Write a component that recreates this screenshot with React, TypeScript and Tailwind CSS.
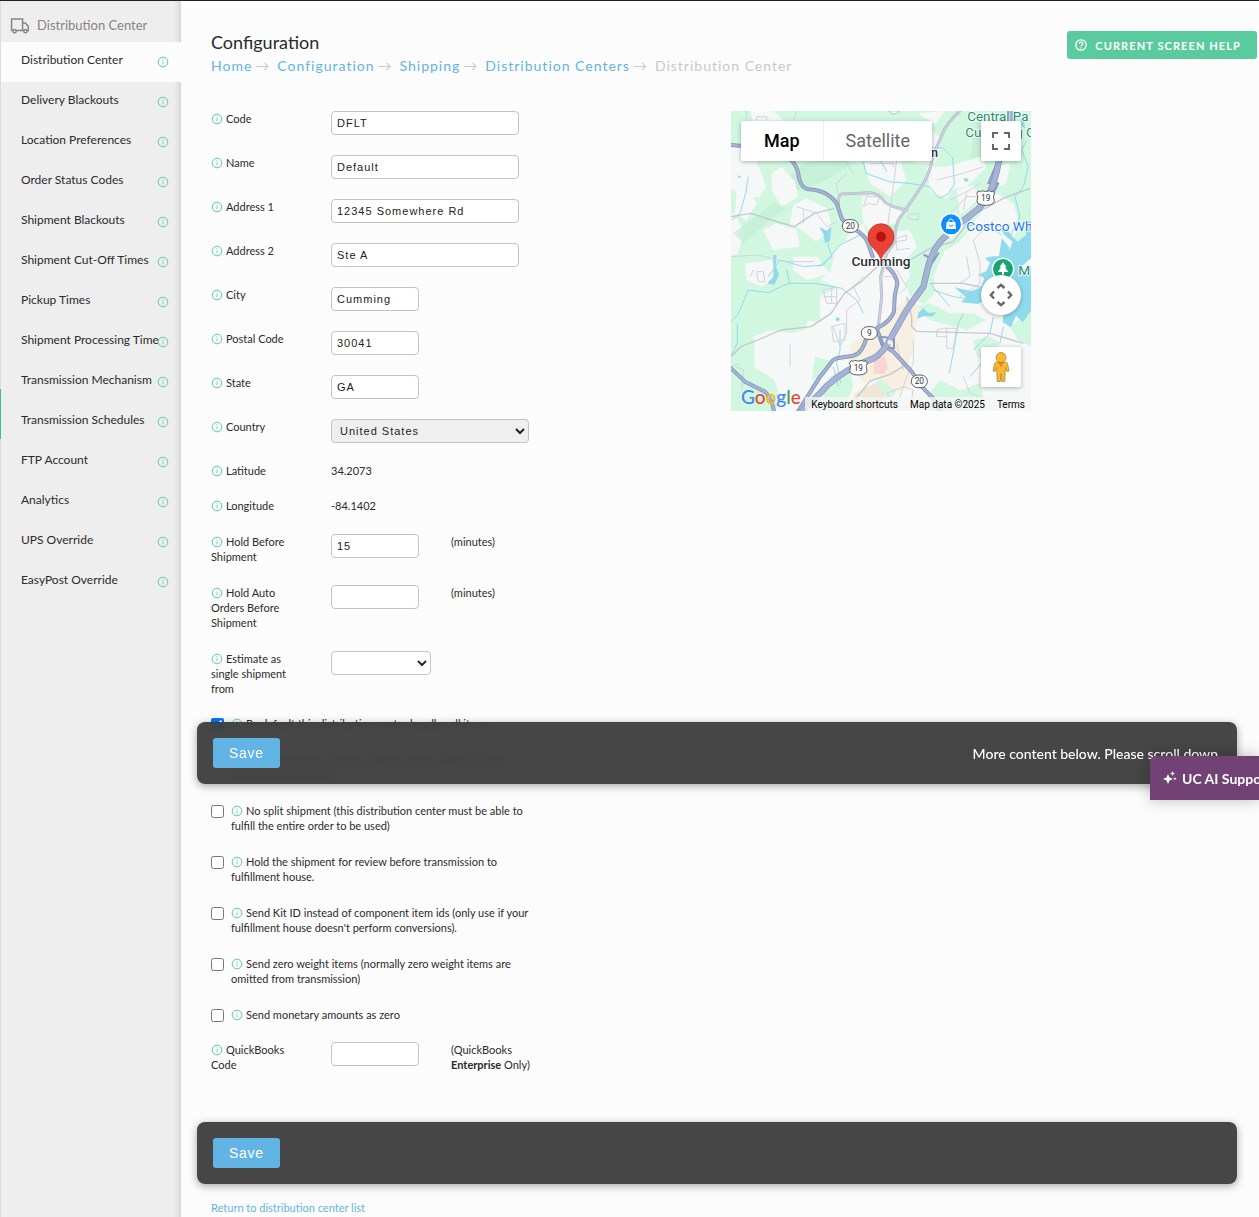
import type { ReactNode } from 'react'

const sidebarItems = [
  'Distribution Center',
  'Delivery Blackouts',
  'Location Preferences',
  'Order Status Codes',
  'Shipment Blackouts',
  'Shipment Cut-Off Times',
  'Pickup Times',
  'Shipment Processing Time',
  'Transmission Mechanism',
  'Transmission Schedules',
  'FTP Account',
  'Analytics',
  'UPS Override',
  'EasyPost Override',
]

const breadcrumbs = ['Home', 'Configuration', 'Shipping', 'Distribution Centers']

const addressFields = [
  { id: 'code', label: 'Code', value: 'DFLT', wide: true },
  { id: 'name', label: 'Name', value: 'Default', wide: true },
  { id: 'address1', label: 'Address 1', value: '12345 Somewhere Rd', wide: true },
  { id: 'address2', label: 'Address 2', value: 'Ste A', wide: true },
  { id: 'city', label: 'City', value: 'Cumming', wide: false },
  { id: 'postalCode', label: 'Postal Code', value: '30041', wide: false },
  { id: 'state', label: 'State', value: 'GA', wide: false },
]

const options = [
  { id: 'handlesAll', label: 'By default this distribution center handles all items', checked: true },
  { id: 'pickup', label: 'Allow customers to pick up their orders at this location during business hours', checked: false },
  { id: 'noSplit', label: 'No split shipment (this distribution center must be able to fulfill the entire order to be used)', checked: false },
  { id: 'holdReview', label: 'Hold the shipment for review before transmission to fulfillment house.', checked: false },
  { id: 'kitId', label: "Send Kit ID instead of component item ids (only use if your fulfillment house doesn't perform conversions).", checked: false },
  { id: 'zeroWeight', label: 'Send zero weight items (normally zero weight items are omitted from transmission)', checked: false },
  { id: 'zeroMoney', label: 'Send monetary amounts as zero', checked: false },
]

const inputClass =
  "block h-6 rounded border border-[#c4c4c4] bg-white px-[5px] font-['Liberation_Sans',sans-serif] text-[11px] tracking-[1px] text-[#222]"

function InfoIcon({ className = '' }: { className?: string }) {
  return (
    <svg viewBox="0 0 12 12" className={`size-3 shrink-0 ${className}`} fill="none" stroke="#5dcba0" aria-hidden="true">
      <circle cx="6" cy="6" r="4.8" />
      <path d="M6 5.3v3.2M6 3.3v1" strokeWidth="1.1" strokeOpacity="0.75" />
    </svg>
  )
}

function TruckIcon() {
  return (
    <svg viewBox="0 0 20 16" className="h-4 w-5" fill="none" stroke="#858585" strokeWidth="1.5" aria-hidden="true">
      <path d="M2.8 12.5H1.6V1.1h11v11.4H6.2M12.6 5h2.7l3 3.4v4.1h-1.2M13.6 12.5h-1" />
      <circle cx="4.6" cy="13.2" r="1.6" />
      <circle cx="15.4" cy="13.2" r="1.6" />
    </svg>
  )
}

function Sidebar() {
  return (
    <aside className="relative w-[181px] shrink-0 border-l border-[#dcdcdc] bg-[#eee] shadow-[inset_-6px_0_6px_-4px_rgba(0,0,0,0.13)]">
      <div className="flex h-[41px] items-end gap-[7px] pb-2 pl-[9px] text-[13px] leading-[18px] text-[#858585]">
        <TruckIcon />
        <span>Distribution Center</span>
      </div>
      <nav>
        {sidebarItems.map((item, i) => (
          <a
            key={item}
            href="#"
            className={`flex h-10 items-start justify-between pr-3 pl-5 text-[12px] leading-9 whitespace-nowrap text-[#2b2b2b] ${i === 0 ? 'bg-[#fcfcfc]' : ''}`}
          >
            <span className="w-0">{item}</span>
            <InfoIcon className="mt-[14px]" />
          </a>
        ))}
      </nav>
      <span className="absolute top-[388px] -left-px h-[50px] w-px bg-[#3fbf8f]" />
    </aside>
  )
}

function FieldRow({ id, label, children, note }: { id?: string; label: string; children: ReactNode; note?: ReactNode }) {
  return (
    <div className="grid grid-cols-[120px_120px_90px]">
      <label htmlFor={id} className="pr-10">
        <InfoIcon className="mr-[3px] inline align-[-2px]" />
        {label}
      </label>
      <div>{children}</div>
      {note && <div>{note}</div>}
    </div>
  )
}

function SaveBar({ children }: { children?: ReactNode }) {
  return (
    <div className="flex h-[62px] items-center justify-between rounded-lg bg-[#3c3c3c]/95 px-4 shadow-[0_2px_8px_rgba(0,0,0,0.35)] backdrop-blur-xs">
      <button
        type="button"
        className="h-[30px] rounded-[3px] bg-[#61b4e4] px-4 font-['Liberation_Sans',sans-serif] text-[14px] tracking-wider text-white"
      >
        Save
      </button>
      {children}
    </div>
  )
}

function Shield({ x, y, label, us = false }: { x: number; y: number; label: string; us?: boolean }) {
  return (
    <g transform={`translate(${x} ${y})`}>
      {us ? (
        <path
          d="M-22-21q7 4 11-1 11 5 22 0 4 5 11 1l5 8q-5 5-3 13 4 9 0 15-9 8-24 7-15 1-24-7-4-6 0-15 2-8-3-13z"
          fill="#fff"
          stroke="#59606a"
          strokeWidth="3"
        />
      ) : (
        <rect x="-24" y="-19" width="48" height="38" rx="19" fill="#fff" stroke="#59606a" strokeWidth="3" />
      )}
      <text y="9" textAnchor="middle" fontSize="25" fill="#333">
        {label}
      </text>
    </g>
  )
}

const parkwayPath =
  'M690 3Q650 40 640 65L608 140Q600 190 580 220L550 265 505 330Q493 360 495 395L470 430 452 500 455 560 445 650M325 290Q322 258 335 252L420 248Q450 252 460 270T530 300'
const routePath =
  'M3 105L65 110 185 150Q205 175 207 205 215 235 235 238 290 240 320 280L335 325 350 342 385 365Q412 385 416 405L428 440M472 470Q500 495 502 520L494 560 492 605Q480 635 445 652L410 680Q398 730 370 737L320 745Q305 750 298 765L270 800 205 903M440 655L458 705 490 725 545 785 580 835 610 865 630 903M3 775L45 815 105 845Q125 865 132 903'
const highwayPath =
  'M848 3L830 90 805 160Q790 250 745 297L690 340 640 385Q605 420 592 480L580 530 530 600 485 680Q460 730 430 745L390 762Q310 800 270 850L215 903'

function MapDrawing() {
  return (
    <svg viewBox="3 3 900 900" className="block size-full" fontFamily="Roboto, sans-serif" role="img" aria-label="Map of Cumming">
      <rect x="3" y="3" width="900" height="900" fill="#f6f7f7" />

      {/* woodland */}
      <g fill="#d2f7e1">
        <path d="M3 3h900v420l-40-10-20-60-60-30-40 10-30 50-70 40-30 70 0 60-30 30-40-20-20-50-10-70-60-30-60 0-50-20-30 30-10 60-60 50-60-10-80-10-60 10 30 60 60-10 20 60-60 40-70 20-50 40-60 20V440l50 10 60-20 20-60-30-60-100 20z" />
        <path d="M3 500l60 20 100-10 60 30 20 70-20 50-40 10-80-10-50 20-40-40zM200 520l70-10 50 20 20 70-60 40-50-10zM3 660l40-10 30 40 0 80 60 40 20 60-20 33H3z" />
        <path d="M560 590l40-10 60 30 70 0 40 20-60 30-110-30zM730 690l50-10 30 20-20 50-50-10zM255 740l40 10-10 50-40 10zM300 800l60-30 10 60-30 73h-80l20-50zM840 650l63-50v110l-40-20zM590 860l40-50 60 30 60-20 20 83H590zM420 830l50-40 40 30-20 40-60 10z" />
      </g>
      <g fill="#bfebd2" opacity=".6">
        <path d="M220 160l100-20 50 20-80 50-80 30-50-20zM10 370l120-90 40 10-60 50-70 60zM480 300l30 10-20 60-30-20zM740 20l60 40-10 80-70 10z" />
      </g>

      {/* built-up areas */}
      <g fill="#f6f7f7">
        <path d="M3 110l30-10 50 60 25 70-18 30-50 5-37-30zM60 3l70 0 30 30-50 20-40-20zM125 190l30-20 40 45 10 45-50 30-30-50zM190 285l40-20 60 30 18 60-50 40-50-40-30-10zM400 160l110-10 20 60-50 50-60-40zM395 262l50-12 50 40 22 15-20 40-45-5-20 40-35-50zM590 170l70 0 20 45-30 50-50-20zM650 170l100-30 20 30-60 60-50 10zM680 240l50-15 20 40-60 50zM750 310l50-60 50 30 20 70-30 50-60 80-90 0-30-50 50-60zM545 90l60-30 30 30-20 70-60 0zM565 10l80-7-30 40zM20 240l30-10 30 50-30 50-35-20zM100 360l40-20 60 20 10 50-80 10zM45 460l80-10 20 50-50 30-45-20zM430 370l110-10 20 50-30 40 10 50-40 50-90-30-40-60zM190 440l70 0 40 50-70 20-40-30zM640 440l140-10 10 100-60 60-80-30-30-60zM790 170l50-10-10 60-30 10zM350 380l50-40 20 60-20 60-60 10zM270 560l60-30 20 70-30 60-50-20z" />
      </g>

      {/* commercial strip */}
      <g fill="#f7efdf">
        <path d="M545 560l28 40-20 60 0 60-20 40 20 60-50 30-60-50-40 20-50-60 10-60 60-30 50-50 40-40z" />
        <path d="M375 850l60-30 30 30-20 53H350z" fill="#efe6d3" />
      </g>
      <path d="M430 750l35-12 8 35-10 18h-32z" fill="#f9d5d5" />

      {/* water */}
      <g fill="#90daee">
        <path d="M903 445l-35 30-25 0-10-40 15-40-25-20-10-15 15-5 20 25 15 15 25-20 5-40 10 0z" />
        <path d="M815 385l22 25 6 50 30 20 30-8v130l-25 35-20-20-15 35-25-15 5-50-60-15-20 10-50-5 15-15-35-30 50 12 30-12 10-28-20-10 25-10 12-25-15-15 22-5 20 0z" />
        <path d="M565 608l15-13 15 14 25-2-12 12-30 0-15 8zM130 435l10 0-3 30 10 30-15 30-20-5 18-20zM268 350l22 12 15-15-5 45-15 8-5-28z" />
        <circle cx="323" cy="628" r="6" />
        <path d="M870 30l12 5 3 20-12-8zM700 205l12 0 4 8-10 3zM22 196l12 4-8 5z" />
      </g>
      <g fill="none" stroke="#90daee" strokeWidth="3" strokeLinejoin="round">
        <path d="M55 200l-8 50-17 60-25 20M3 635l20-20 32-75 60 8 60-28 80 0 80 15 45 35 20 40M22 640l0 60-20 40M115 500l35-50 70 20 60-5 50-60 60-30M290 390l15 50-40 30M170 480l10 45" />
        <path d="M400 155l8 35 70 25 60 5 60 10 30 35 25-12 20-30-5-80-30-30-70 0 25-80M450 150l20 35M890 90l-15 30 20 50-15 60-25 30 15 60-30 60M790 620l-10 50-50 50M820 650l-10 50M700 610l-15 30-12 70-15 80M780 730l-60 70M330 660l0 60-10 40 12 60M310 770l15 60M715 345l70 10 30 20M660 590l-60-70M610 540l60 20 70 10" />
      </g>

      {/* local streets */}
      <g fill="none" stroke="#d0d4e0" strokeWidth="3" strokeLinejoin="round">
        <path d="M50 3l0 70 60 30M200 3l-10 30M350 190l-30 30 10 70M350 160l20 30M400 290l10-30 40 0-10 25-25-5zM200 290l60 20 30 40 30-15M220 300l0 40M500 150l-10 80-15 100-5 90M420 160l70 0 0 10M620 210l80-20 60-20M660 270l60-30 30-20M640 330l70-70 40 0M700 300l10-50M790 330l-60 60 20 70 0 60-60 40M500 385l30-10 0 15-30 5 0 25 40-5M280 540l40-10 0 50-30 0zM280 560l40 0M305 535l0 45M350 600l0 70-20 40-20-60M305 650l40-10 0 50-35 5zM350 600l40-30-20-40 30-30M80 485l20 0 5 30-20 0zM70 480l-10 20M180 700l0 70M620 660l20-5 40 0-10 60-20 0 0-35-30 0zM650 655l0 30M710 440l10 60-30 20M550 690l0 70-20 40-30 90M500 700l20 80M20 770l20 10-5 60M3 770l25-10M470 850l50-20 30 10-10 50-40 0zM700 800l20 50 50 20M840 520l-60 20M3 440l80-5 80 20 90 0M500 480l30 50-20 20M460 500l30 0 10 20M535 315l30-5 0 20-30-5zM80 20l30 0 0 15-30 0z" />
      </g>
      <g fill="none" stroke="#c3c7cf" strokeWidth="4" strokeLinejoin="round">
        <path d="M3 740l30-30 50-20 70-30 90-10 60-40 40-60 50-35 60-55M3 320l60-10 60 20 70 20 60-40 60-15M360 903l20-40 40-50 60-20 50-30M540 450l60-35 70-20 60-80 90-50 80-30M530 560l15 60 0 30 15 14 220 6 100 30M600 520l100 0 90 20" />
      </g>

      {/* state routes */}
      <g fill="none" strokeLinecap="round" strokeLinejoin="round">
        <path d={parkwayPath} stroke="#b3b9cd" strokeWidth="9" />
        <path d={parkwayPath} stroke="#cbd0e0" strokeWidth="5" />
        <path d={routePath} stroke="#8492b6" strokeWidth="12" />
        <path d={routePath} stroke="#a5b4d6" strokeWidth="7" />
        <path d="M800 160l-25 60 30 0-20 40M583 435l20 10-10 35 32-50M450 680l42 5 0 30-35-5z" stroke="#8c9abf" strokeWidth="6" />
        <path d={highwayPath} stroke="#8492b6" strokeWidth="19" />
        <path d={highwayPath} stroke="#a5b4d6" strokeWidth="15" />
        <circle cx="480" cy="697" r="7" fill="#eef0f5" />
      </g>

      <Shield x={361} y={348} label="20" />
      <Shield x={418} y={669} label="9" />
      <Shield x={568} y={814} label="20" />
      <Shield x={767} y={264} label="19" us />
      <Shield x={385} y={773} label="19" us />

      {/* places */}
      <path d="M475 3q17 18 34 0z" fill="#fff" stroke="#9aa" strokeWidth="2" />
      <g stroke="#fff" strokeWidth="5" paintOrder="stroke">
        <text x="712" y="34" fontSize="40" fill="#1c8f6b">Central Pa</text>
        <text x="706" y="80" fontSize="40" fill="#1c8f6b">Cumming G</text>
        <text x="603" y="141" fontSize="38" fontWeight="500" fill="#2a2f33">n</text>
        <text x="709" y="363" fontSize="41" fill="#1f73e8">Costco Wh</text>
        <text x="865" y="495" fontSize="41" fill="#1c8f6b">M</text>
      </g>
      <path d="M663 388l-14-17h28z" fill="#fff" />
      <circle cx="663" cy="343" r="35" fill="#fff" />
      <circle cx="663" cy="343" r="30" fill="#0d90ff" />
      <path d="M650 336h26l2 21h-30z" fill="#fff" />
      <path d="M656 338v-5q7-13 14 0v5" fill="none" stroke="#fff" strokeWidth="3" />
      <path d="M657 345q6 8 12 0" fill="none" stroke="#0d90ff" strokeWidth="3" />
      <circle cx="819" cy="477" r="34" fill="#fff" />
      <circle cx="819" cy="477" r="30" fill="#17a673" />
      <path d="M819 457l11 15h-5l10 14h-13v8h-6v-8h-13l10-14h-5z" fill="#fff" />

      <path d="M453 453C449 421 414 413 414 380a39 39 0 0178 0C492 413 457 421 453 453z" fill="#ea4335" stroke="#b5281c" strokeWidth="2" />
      <circle cx="453" cy="380" r="15" fill="#b31412" />
      <text x="453" y="468" textAnchor="middle" fontSize="41" fontWeight="500" fill="#2a2f33" stroke="#fff" strokeWidth="5" paintOrder="stroke">
        Cumming
      </text>
      <path d="M446 430h14l-7 23z" fill="#ea4335" />
    </svg>
  )
}

const googleLetters = [
  { char: 'G', color: 'text-[#4285f4]' },
  { char: 'o', color: 'text-[#ea4335]' },
  { char: 'o', color: 'text-[#fbbc04]' },
  { char: 'g', color: 'text-[#4285f4]' },
  { char: 'l', color: 'text-[#34a853]' },
  { char: 'e', color: 'text-[#ea4335]' },
]

function LocationMap() {
  return (
    <div className="relative size-[300px] shrink-0 overflow-hidden font-['Roboto',sans-serif]">
      <MapDrawing />

      <div className="absolute top-[10px] left-[10px] flex h-10 rounded-[2px] bg-white pb-px text-[18px] shadow-[0_1px_4px_rgba(0,0,0,0.3)]">
        <button type="button" className="border-r border-[#eee] px-[23px] font-medium text-black">
          Map
        </button>
        <button type="button" className="px-[22px] text-[#666]">
          Satellite
        </button>
      </div>

      <div className="absolute inset-y-[10px] right-[10px] flex w-10 flex-col">
        <button
          type="button"
          aria-label="Toggle fullscreen view"
          className="flex h-10 items-center justify-center rounded-[2px] bg-white shadow-[0_1px_4px_rgba(0,0,0,0.3)]"
        >
          <svg viewBox="0 0 18 18" className="size-[18px]" fill="#666">
            <path d="M0 0v6h2V2h4V0zM16 0h-4v2h4v4h2V0zM16 16h-4v2h6v-6h-2zM2 12H0v6h6v-2H2z" />
          </svg>
        </button>
        <button
          type="button"
          aria-label="Map camera controls"
          className="mt-[114px] flex h-10 items-center justify-center rounded-full bg-white shadow-[0_1px_4px_rgba(0,0,0,0.3)]"
        >
          <svg viewBox="0 0 24 24" className="size-6" fill="none" stroke="#666" strokeWidth="2.4">
            <path d="M8.5 5L12 1.8 15.5 5M8.5 19l3.5 3.2 3.5-3.2M5 8.5L1.8 12 5 15.5M19 8.500l3.200 3.500-3.200 3.500" />
          </svg>
        </button>
        <button
          type="button"
          aria-label="Street View"
          className="mt-8 flex h-10 items-center justify-center rounded-[2px] bg-white shadow-[0_1px_4px_rgba(0,0,0,0.3)]"
        >
          <svg viewBox="0 0 18 30" className="h-[30px] w-[18px]" fill="#fbb82c" stroke="#9b8145" strokeWidth="0.7">
            <path d="M4.500 10h9q1.500 0 2 1.500L17 19l-2 .5-1.500-4-.7 14H9.700L9 21.500l-.7 8H5.200l-.7-14-1.500 4-2-.5 1.500-7.500Q3 10 4.500 10z" />
            <path d="M5.500 10L9 15l3.500-5z" fill="#e8842c" stroke="none" />
            <circle cx="9" cy="5.500" r="5" />
          </svg>
        </button>
      </div>

      <div className="absolute inset-x-0 bottom-0 flex items-end justify-between pl-[10px]">
        <span className="font-['Lato',sans-serif] text-[19px] leading-7 font-medium">
          {googleLetters.map((l, i) => (
            <span key={i} className={l.color}>
              {l.char}
            </span>
          ))}
        </span>
        <span className="flex h-[14px] items-center gap-3 bg-[#f5f5f5]/80 px-[6px] text-[10px] whitespace-nowrap text-black">
          <button type="button">Keyboard shortcuts</button>
          <span>Map data ©2025</span>
          <a href="#">Terms</a>
        </span>
      </div>
    </div>
  )
}

export default function App() {
  return (
    <div className="relative flex min-h-screen overflow-hidden border-t border-[#222] bg-[#fcfcfc] font-['Lato',sans-serif] text-[11px] leading-[15px] text-[#2b2b2b]">
      <Sidebar />
      <main className="min-w-0 flex-1">
        <header className="flex items-start justify-between pt-[29px] pr-[2px] pl-[30px]">
          <div>
            <h1 className="text-[18px] leading-6">Configuration</h1>
            <nav aria-label="Breadcrumb" className="flex gap-1 text-[14px] leading-6 tracking-[1px] text-[#c9c9c9]">
              {breadcrumbs.map((crumb) => (
                <span key={crumb} className="flex gap-[3px]">
                  <a href="#" className="text-[#61b4e4]">
                    {crumb}
                  </a>
                  <span className="w-[18px]">→</span>
                </span>
              ))}
              <span>Distribution Center</span>
            </nav>
          </div>
          <button
            type="button"
            className="mt-px flex h-7 items-center gap-2 rounded-[3px] bg-[#5acb9f] pr-4 pl-2 text-[11px] font-bold tracking-widest text-white"
          >
            <svg viewBox="0 0 12 12" className="size-3" fill="none" stroke="currentColor" strokeWidth="1.3" aria-hidden="true">
              <circle cx="6" cy="6" r="5.200" />
              <path d="M4.300 4.900c0-2.200 3.400-2.200 3.400-.2 0 1.200-1.600 1.200-1.600 2.500M6.100 8.200v1.200" />
            </svg>
            CURRENT SCREEN HELP
          </button>
        </header>

        <form className="pt-[33px]">
          <div className="flex items-start pl-[30px]">
            <div className="w-[520px] shrink-0">
              <div className="flex flex-col gap-5">
                {addressFields.map((f) => (
                  <FieldRow key={f.id} id={f.id} label={f.label}>
                    <input id={f.id} type="text" defaultValue={f.value} className={`${inputClass} ${f.wide ? 'w-[188px]' : 'w-[88px]'}`} />
                  </FieldRow>
                ))}
                <FieldRow id="country" label="Country">
                  <select
                    id="country"
                    className="block h-6 w-[198px] rounded border border-[#c4c4c4] bg-[#efefef] px-1 font-['Liberation_Sans',sans-serif] text-[11px] tracking-[1px] text-[#222]"
                  >
                    <option>United States</option>
                  </select>
                </FieldRow>
                <FieldRow label="Latitude">34.2073</FieldRow>
                <FieldRow label="Longitude">-84.1402</FieldRow>
              </div>

              <div className="mt-[21px] flex flex-col gap-[21px]">
                <FieldRow id="holdBefore" label="Hold Before Shipment" note="(minutes)">
                  <input id="holdBefore" type="text" defaultValue="15" className={`${inputClass} w-[88px]`} />
                </FieldRow>
                <FieldRow id="holdAuto" label="Hold Auto Orders Before Shipment" note="(minutes)">
                  <input id="holdAuto" type="text" className={`${inputClass} w-[88px]`} />
                </FieldRow>
                <FieldRow id="estimateFrom" label="Estimate as single shipment from">
                  <select id="estimateFrom" className="block h-6 w-[100px] rounded border border-[#c4c4c4] bg-white px-1">
                    <option></option>
                  </select>
                </FieldRow>
              </div>

              <div className="mt-5 flex flex-col gap-[21px]">
                {options.map((o) => (
                  <div key={o.id} className="flex w-[320px] items-start gap-[7px]">
                    <input id={o.id} type="checkbox" defaultChecked={o.checked} className="mt-[2px] size-[13px] shrink-0" />
                    <label htmlFor={o.id}>
                      <InfoIcon className="mr-[3px] inline align-[-2px]" />
                      {o.label}
                    </label>
                  </div>
                ))}
              </div>

              <div className="mt-5 mb-[50px]">
                <FieldRow
                  id="quickbooks"
                  label="QuickBooks Code"
                  note={
                    <>
                      (QuickBooks <b>Enterprise</b> Only)
                    </>
                  }
                >
                  <input id="quickbooks" type="text" className={`${inputClass} w-[88px]`} />
                </FieldRow>
              </div>
            </div>
            <LocationMap />
          </div>

          <div className="mr-[22px] ml-4">
            <SaveBar />
          </div>
        </form>

        <a href="#" className="mt-4 mb-2 ml-[30px] inline-block text-[#61b4e4]">
          Return to distribution center list
        </a>
      </main>

      <div className="absolute top-[721px] right-[22px] left-[197px]">
        <SaveBar>
          <span className="pr-[3px] text-[14px] font-medium text-white">More content below. Please scroll down</span>
        </SaveBar>
      </div>
      <button
        type="button"
        className="absolute top-[755px] right-0 flex h-11 w-[109px] items-center gap-1 overflow-hidden rounded-tl-md bg-[#714273] pl-3 text-[14px] font-bold whitespace-nowrap text-white shadow-[0_0_16px_rgba(0,0,0,0.25)]"
      >
        <svg viewBox="0 0 16 16" className="size-4 shrink-0" fill="currentColor" aria-hidden="true">
          <path d="M6 4l1.500 3.500L11 9l-3.500 1.500L6 14l-1.500-3.500L1 9l3.500-1.500zM10.500 1l.8 1.700 1.700.8-1.700.8-.8 1.700-.8-1.700L8 3.500l1.700-.8zM13 7l.5 1.300 1.300.5-1.300.5L13 10.600l-.5-1.300-1.300-.5 1.300-.5z" />
        </svg>
        UC AI Support
      </button>
    </div>
  )
}
